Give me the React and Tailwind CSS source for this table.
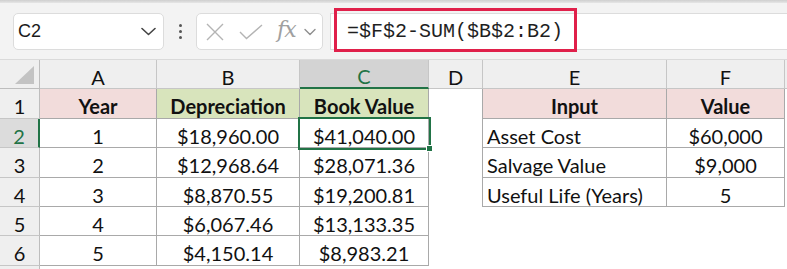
import React from "react";

const GRID = "grid grid-cols-[40px_117px_143px_129px_54px_184px_118px_1fr]";

const leftRows = [
  ["1", "$18,960.00", "$41,040.00"],
  ["2", "$12,968.64", "$28,071.36"],
  ["3", "$8,870.55", "$19,200.81"],
  ["4", "$6,067.46", "$13,133.35"],
  ["5", "$4,150.14", "$8,983.21"],
];

const rightRows = [
  ["Asset Cost", "$60,000"],
  ["Salvage Value", "$9,000"],
  ["Useful Life (Years)", "5"],
];

const heights = ["h-[30px]", "h-[29px]", "h-[30px]", "h-[29px]", "h-[29px]", "h-[30px]", "h-[30px]"];

const Cell = ({ children, className = "" }) => (
  <div className={`flex items-center pt-[5px] overflow-hidden whitespace-nowrap ${className}`}>
    {children}
  </div>
);

const Toolbar = () => (
  <div className="bg-[#f3f3f3] h-[60px] border-b border-[#dadada]">
    <div className="h-[3px] bg-gradient-to-b from-[#cfcfcf] to-[#e6e6e6]" />
    <div className="flex items-start pt-[10px]">
      {/* name box */}
      <div className="ml-[13px] w-[151px] h-[37px] bg-white border border-[#dcdcdc] rounded-[5px] flex items-center justify-between pl-[4px] pr-[7px]">
        <span className="font-['Liberation_Sans',sans-serif] text-[18px] text-[#1a1a1a]">C2</span>
        <svg width="15" height="9" viewBox="0 0 15 9" fill="none">
          <path d="M1 1.5l6.5 6 6.5-6" stroke="#444" strokeWidth="1.6" strokeLinecap="round" strokeLinejoin="round" />
        </svg>
      </div>
      {/* colon */}
      <div className="w-[32px] h-[37px] flex flex-col items-center justify-center gap-[3px]">
        <span className="w-[3px] h-[3px] rounded-full bg-[#555]" />
        <span className="w-[3px] h-[3px] rounded-full bg-[#555]" />
        <span className="w-[3px] h-[3px] rounded-full bg-[#555]" />
      </div>
      {/* fx box */}
      <div className="w-[127px] h-[37px] bg-white border border-[#dcdcdc] rounded-[5px] flex items-center pl-[9px]">
        <svg width="18" height="18" viewBox="0 0 18 18" fill="none">
          <path d="M1 1l16 16M17 1L1 17" stroke="#b4b4b4" strokeWidth="1.4" />
        </svg>
        <svg className="ml-[15px]" width="24" height="16" viewBox="0 0 24 16" fill="none">
          <path d="M1 8l6.5 6.5L23 1" stroke="#b4b4b4" strokeWidth="1.4" />
        </svg>
        <span className="ml-[14px] font-['DejaVu_Serif',serif] italic text-[22px] leading-none text-[#a0a0a0] -mt-[4px] tracking-[-1px]">fx</span>
        <svg className="ml-[8px]" width="12" height="8" viewBox="0 0 12 8" fill="none">
          <path d="M1 1.5l5 5 5-5" stroke="#8f8f8f" strokeWidth="1.4" strokeLinecap="round" strokeLinejoin="round" />
        </svg>
      </div>
      {/* formula bar */}
      <div className="relative ml-[7px] flex-1 h-[37px] bg-white border-y border-l border-[#dcdcdc] flex items-center pl-[16px]">
        <span className="font-['Liberation_Mono',monospace] text-[20px] text-[#1f1f1f]">=$F$2-SUM($B$2:B2)</span>
        <div className="absolute left-[3px] top-[-6px] w-[243px] h-[44px] border-[3px] border-[#e0204a]" />
      </div>
    </div>
  </div>
);

const HeaderRow = () => {
  const sep = "border-r border-b border-[#c6c6c6] bg-[#efefef] justify-center";
  return (
    <div className={`${GRID} h-[29px] font-['Lato',sans-serif] text-[20px] text-[#111]`}>
      <div className="relative border-r border-b border-[#bdbdbd] bg-[#efefef]">
        <svg className="absolute right-[5px] bottom-[4px]" width="19" height="18" viewBox="0 0 19 18">
          <polygon points="19,0 19,18 0,18" fill="#c3c3c3" />
        </svg>
      </div>
      <Cell className={sep}>A</Cell>
      <Cell className={sep}>B</Cell>
      <Cell className="border-r border-b-2 border-r-[#c6c6c6] border-b-[#217346] bg-[#d3d3d3] justify-center text-[#217346]">C</Cell>
      <Cell className={sep}>D</Cell>
      <Cell className={sep}>E</Cell>
      <Cell className={sep}>F</Cell>
      <div className="border-b border-[#c6c6c6] bg-[#efefef]" />
    </div>
  );
};

const Row = ({ n }) => {
  const line = "border-[#a9a9a9]";
  const inLeft = n <= 6;
  const inRight = n <= 4;
  const first = n === 1;
  const data = n >= 2 && n <= 6 ? leftRows[n - 2] : null;
  const rdata = n >= 2 && n <= 4 ? rightRows[n - 2] : null;
  const sel = n === 2;
  const leftCls = inLeft ? `border-r border-b ${line}` : "";
  const rightCls = inRight ? `border-r border-b ${line}` : "";

  return (
    <div className={`${GRID} ${heights[n - 1]} font-['Lato',sans-serif] text-[20px] text-[#111]`}>
      <Cell
        className={`justify-center border-b border-[#c6c6c6] ${
          sel ? "bg-[#dcdcdc] text-[#217346] border-r-2 border-r-[#217346]" : "bg-[#efefef] border-r border-r-[#bdbdbd]"
        }`}
      >
        {n <= 6 ? n : ""}
      </Cell>
      <Cell className={`justify-center ${leftCls} ${first ? "bg-[#f2dcdb] font-bold" : ""}`}>
        {first ? "Year" : data ? data[0] : ""}
      </Cell>
      <Cell className={`justify-center ${leftCls} ${first ? "bg-[#d8e4bc] font-bold" : ""}`}>
        {first ? "Depreciation" : data ? data[1] : ""}
      </Cell>
      <Cell className={`justify-center ${leftCls} ${first ? "bg-[#d8e4bc] font-bold" : ""}`}>
        {first ? "Book Value" : data ? data[2] : ""}
      </Cell>
      <div className={inRight ? `border-r ${line}` : ""} />
      <Cell className={`${first ? "justify-center bg-[#f2dcdb] font-bold" : "pl-[4px]"} ${rightCls}`}>
        {first ? "Input" : rdata ? rdata[0] : ""}
      </Cell>
      <Cell className={`justify-center ${rightCls} ${first ? "bg-[#f2dcdb] font-bold" : ""}`}>
        {first ? "Value" : rdata ? rdata[1] : ""}
      </Cell>
      <div />
    </div>
  );
};

export default function App() {
  return (
    <div className="w-[787px] h-[269px] overflow-hidden bg-white">
      <Toolbar />
      <div className="relative">
        <HeaderRow />
        {[1, 2, 3, 4, 5, 6, 7].map((n) => (
          <Row key={n} n={n} />
        ))}
        {/* active cell C2 */}
        <div className="absolute left-[298px] top-[57px] w-[133px] h-[33px] border-2 border-[#217346]" />
        <div className="absolute left-[426px] top-[85px] w-[7px] h-[7px] bg-[#217346] border border-white" />
      </div>
    </div>
  );
}
